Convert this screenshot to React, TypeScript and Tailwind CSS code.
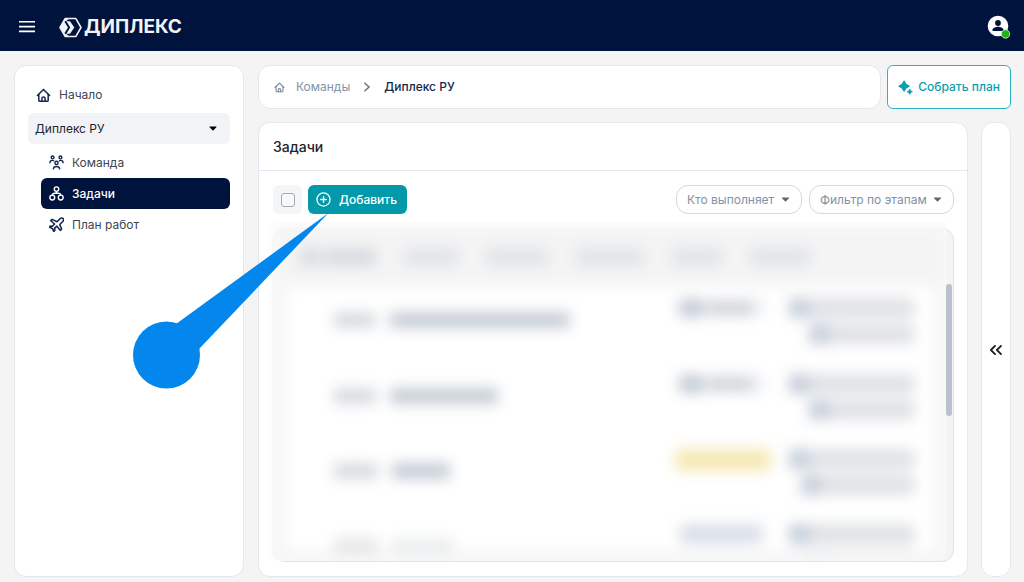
import { useState, type ReactNode } from "react";

const stroke = {
  fill: "none",
  stroke: "currentColor",
  strokeLinecap: "round" as const,
  strokeLinejoin: "round" as const,
};

function HomeIcon({ className }: { className?: string }) {
  return (
    <svg viewBox="0 0 16 16" className={className} strokeWidth={1.6} {...stroke} aria-hidden="true">
      <path d="M1.500 8 8 1.500l6.500 6.500" />
      <path d="M3 7v6a1.200 1.200 0 0 0 1.200 1.200h7.600A1.200 1.200 0 0 0 13 13V7" />
      <path d="M6.300 14.200v-2.900a1.700 1.700 0 0 1 3.400 0v2.900" />
    </svg>
  );
}

function TeamIcon({ className }: { className?: string }) {
  return (
    <svg viewBox="0 0 16 16" className={className} strokeWidth={1.500} {...stroke} aria-hidden="true">
      <circle cx="3.800" cy="2.600" r="1.500" />
      <circle cx="12.200" cy="2.600" r="1.500" />
      <circle cx="8" cy="8.400" r="1.700" />
      <path d="M1 8.200c0-1.500.9-2.500 2.500-2.500.6 0 1 .1 1.400.4M15 8.200c0-1.500-.9-2.500-2.500-2.500-.6 0-1 .1-1.400.4" />
      <path d="M4.600 14.800c.2-1.600 1.600-2.600 3.400-2.600s3.200 1 3.400 2.600" />
    </svg>
  );
}

function TreeIcon({ className }: { className?: string }) {
  return (
    <svg viewBox="0 0 16 16" className={className} strokeWidth={1.500} {...stroke} aria-hidden="true">
      <circle cx="8" cy="3.300" r="2.400" />
      <circle cx="3.500" cy="12.300" r="2.600" />
      <circle cx="12.500" cy="12.300" r="2.600" />
      <path d="M8 5.700v2.100M3.500 9.700C3.700 8.500 4.500 7.800 6 7.800h4c1.500 0 2.300.7 2.500 1.900" />
    </svg>
  );
}

function PlaneIcon({ className }: { className?: string }) {
  return (
    <svg viewBox="1 1 22 22" className={className} strokeWidth={2.300} {...stroke} aria-hidden="true">
      <path d="m17.500 20.500 2-1.800L16.800 12l4-4c1.500-1.500 1.600-3.800.9-4.900-1.200-.7-3.500-.6-5 .9l-3.900 3.900L5.500 4.500l-2 2 5.700 4.800L6 14.600l-3-.5-1.500 1.500 4.300 2.200 2.200 4.400 1.600-1.500-.5-3 3.400-3.300z" />
    </svg>
  );
}

function Caret({ className }: { className?: string }) {
  return (
    <svg viewBox="0 0 10 6" className={className} fill="currentColor" aria-hidden="true">
      <path d="M1.200.5h7.600c.6 0 .8.600.4 1L5.600 5.200a.8.800 0 0 1-1.200 0L.8 1.500c-.4-.4-.2-1 .4-1z" />
    </svg>
  );
}

function Logo() {
  return (
    <a href="#home" className="flex items-center gap-[2px] text-[#f1f3f7]">
      <svg viewBox="0 0 24 22" className="h-[21px] w-[23px]" aria-hidden="true">
        <path d="M6.500 1.500h11L23 11l-5.500 9.500h-11L1 11z" fill="none" stroke="currentColor" strokeWidth="1.600" strokeLinejoin="round" />
        <path d="M6.500 1.500h4L7.500 4.500h4L16 11l-4.500 6.500h-4l3 3h-4L1 11z" fill="currentColor" />
        <path d="m6.500 4.500 4 6.500-4 6.500" fill="none" stroke="#00133d" strokeWidth="2" />
      </svg>
      <span className="text-[19px] leading-6 font-bold">ДИПЛЕКС</span>
    </a>
  );
}

function NavLink({ icon, label, active }: { icon: ReactNode; label: string; active?: boolean }) {
  return (
    <a
      href="#section"
      aria-current={active ? "page" : undefined}
      className={
        active
          ? "flex h-[31px] items-center gap-2 rounded-md bg-[#00133d] px-2 font-medium text-white"
          : "flex h-[31px] items-center gap-2 px-2 text-[#3f4650]"
      }
    >
      <span className={active ? "text-white" : "text-[#14274d]"}>{icon}</span>
      {label}
    </a>
  );
}

function Sidebar() {
  return (
    <nav className="w-[230px] shrink-0 rounded-xl border border-[#e4e7ee] bg-white px-[13px] pt-[14px] text-xs">
      <a href="#start" className="flex h-[30px] items-center gap-2 px-2 text-[#3f4650]">
        <HomeIcon className="size-[15px] text-[#14274d]" />
        Начало
      </a>
      <div className="relative my-[3px]">
        <select
          aria-label="Команда"
          className="h-[31px] w-full appearance-none rounded-md bg-[#f1f3f7] px-[7px] text-xs text-[#20242b]"
        >
          <option>Диплекс РУ</option>
        </select>
        <Caret className="pointer-events-none absolute top-[13px] right-[13px] h-[5px] w-2 text-black" />
      </div>
      <div className="pl-[13px]">
        <NavLink icon={<TeamIcon className="size-[15px]" />} label="Команда" />
        <NavLink icon={<TreeIcon className="size-[15px]" />} label="Задачи" active />
        <NavLink icon={<PlaneIcon className="size-[15px]" />} label="План работ" />
      </div>
    </nav>
  );
}

function Filter({ label, width }: { label: string; width: string }) {
  return (
    <div className="relative">
      <select
        aria-label={label}
        className={`${width} h-[29px] appearance-none rounded-xl border border-[#d5d8de] bg-white pl-[10px] text-xs text-[#7f92a8]`}
      >
        <option>{label}</option>
      </select>
      <Caret className="pointer-events-none absolute top-3 right-3 h-[5px] w-[9px] text-[#666]" />
    </div>
  );
}

type Row = { id: string; title: string; status: "split" | "warn" | "plain"; second: string; faded?: boolean };

const rows: Row[] = [
  { id: "w-[42px]", title: "w-[180px]", status: "split", second: "w-[106px]" },
  { id: "w-[42px]", title: "w-[108px]", status: "split", second: "w-[106px]" },
  { id: "w-[44px]", title: "w-[58px]", status: "warn", second: "w-[114px]" },
  { id: "w-[44px]", title: "w-[62px]", status: "plain", second: "w-[112px]", faded: true },
];

const tabs = ["w-[54px]", "w-[62px]", "w-[68px]", "w-[50px]", "w-[60px]"];

function Status({ kind }: { kind: Row["status"] }) {
  if (kind === "warn") {
    return <div className="-ml-1 h-[22px] w-24 rounded-md bg-[#f5e8b4]" />;
  }
  if (kind === "plain") {
    return <div className="h-[20px] w-[84px] rounded-md bg-[#dae0e8]" />;
  }
  return (
    <div className="flex h-[20px] w-[88px] items-center rounded-md bg-[#f3f5f8]">
      <div className="h-[18px] w-6 bg-[#c4ccd6]" />
      <div className="ml-1 h-[14px] w-[46px] bg-[#d0d3d8]" />
    </div>
  );
}

function Tag({ width }: { width: string }) {
  return (
    <div className={`${width} flex h-[20px] rounded-md bg-[#dfe1e5]`}>
      <div className="h-full w-5 bg-[#c6cfda]" />
    </div>
  );
}

function TaskList() {
  return (
    <div className="relative min-h-0 flex-1 rounded-xl border border-[#e0e3ec] bg-[#f4f4f4]">
      <div className="absolute -top-[7px] right-[6px] bottom-0 -left-[6px] overflow-hidden rounded-b-xl bg-white/60">
        <div className="mt-1 ml-2 h-full bg-[#f4f4f4] blur-[7px]">
          <div className="flex h-[60px] items-center gap-7 pt-[2px] pl-6">
            <div className="flex gap-1">
              <div className="h-[18px] w-5 bg-[#d8dce1]" />
              <div className="h-[18px] w-[52px] bg-[#d8dce1]" />
            </div>
            {tabs.map((width, i) => (
              <div key={i} className={`${width} h-[18px] bg-[#e1e4e9]`} />
            ))}
          </div>
          <div className="mr-3 ml-[10px] h-[266px] overflow-hidden bg-white pr-5">
            <table className="w-full table-fixed" aria-label="Задачи">
              <tbody>
                {rows.map((row, i) => (
                  <tr key={i} className="h-[75px] border-b border-[#fafafa] align-top">
                    <td className="pt-[26px] pl-12">
                      <div className="flex gap-[14px]">
                        <div className={`${row.id} h-4 ${row.faded ? "bg-[#e6e7ea]" : "bg-[#d7dadf]"}`} />
                        <div className={`${row.title} h-4 ${row.faded ? "bg-[#ebedef]" : "bg-[#c5ccd5]"}`} />
                      </div>
                    </td>
                    <td className="w-[108px] pt-3">
                      <Status kind={row.status} />
                    </td>
                    <td className="w-32 pt-3">
                      <div className="flex flex-col items-end gap-[6px]">
                        <Tag width="w-[126px]" />
                        <Tag width={row.second} />
                      </div>
                    </td>
                  </tr>
                ))}
              </tbody>
            </table>
          </div>
        </div>
      </div>
      <div className="absolute top-[55px] right-px h-[132px] w-[6px] rounded-full bg-[#b9c1cc]" />
    </div>
  );
}

function Breadcrumbs() {
  return (
    <nav
      aria-label="Навигация"
      className="flex h-11 min-w-0 flex-1 items-center rounded-xl border border-[#e4e7ee] bg-white px-[15px] text-xs"
    >
      <HomeIcon className="size-[11px] text-[#7c8999]" />
      <a href="#teams" className="ml-[11px] text-[#8294a8]">
        Команды
      </a>
      <svg viewBox="0 0 8 12" className="mx-[13px] h-[10px] w-[8px] text-[#6b7785]" strokeWidth={2} {...stroke} aria-hidden="true">
        <path d="m1.500 1.500 5 4.500-5 4.500" />
      </svg>
      <span className="font-medium text-[#14274d]">Диплекс РУ</span>
    </nav>
  );
}

function Callout() {
  return (
    <svg viewBox="0 0 196 178" className="pointer-events-none absolute top-[212px] left-[133px] h-[178px] w-[196px] text-[#0487ec]" fill="currentColor" aria-hidden="true">
      <circle cx="33.500" cy="143" r="33.500" />
      <path d="M195.500 1 43 112 33.500 143.500 66 137z" />
    </svg>
  );
}

export default function App() {
  const [checked, setChecked] = useState(false);
  return (
    <div className="relative flex h-screen flex-col overflow-hidden bg-[#f4f4f4] font-['Inter','Noto_Sans',sans-serif] text-[#20242b]">
      <header className="flex h-[51px] shrink-0 items-center bg-[#00133d] px-[14px] pt-[3px]">
        <button type="button" aria-label="Меню" className="mr-6 ml-[5px] text-white">
          <svg viewBox="0 0 16 12" className="h-3 w-4" fill="currentColor" aria-hidden="true">
            <path d="M0 0h16v1.600H0zM0 4.800h16v1.600H0zM0 9.600h16v1.600H0z" />
          </svg>
        </button>
        <Logo />
        <button type="button" aria-label="Профиль" className="ml-auto">
          <svg viewBox="0 0 24 24" className="size-6" aria-hidden="true">
            <circle cx="12" cy="11" r="10.300" fill="#fff" />
            <circle cx="12" cy="8" r="2.900" fill="#00133d" />
            <path d="M6.500 16v-1.200c0-2 3.700-3 5.500-3s5.500 1 5.500 3V16z" fill="#00133d" />
            <circle cx="19.500" cy="19" r="4.200" fill="#18b513" stroke="#dff3df" strokeWidth=".8" />
          </svg>
        </button>
      </header>

      <div className="flex min-h-0 flex-1 gap-[14px] px-[14px] pt-[14px] pb-[5px]">
        <Sidebar />
        <div className="-mr-px flex min-w-0 flex-1 flex-col gap-[13px]">
          <div className="flex gap-[6px]">
            <Breadcrumbs />
            <button
              type="button"
              className="flex h-11 items-center gap-[5px] rounded-md border border-[#2ab5bf] bg-white px-[10px] text-xs font-medium text-[#0a9fad]"
            >
              <svg viewBox="0 0 16 16" className="size-[15px]" fill="currentColor" aria-hidden="true">
                <path d="M6.500 1.500Q7.600 5.400 11.500 6.500 7.600 7.600 6.500 11.500 5.400 7.600 1.500 6.500 5.400 5.400 6.500 1.500z" stroke="currentColor" strokeWidth="1.800" strokeLinejoin="round" />
                <path d="m12.500 9.500 1 2 2 1-2 1-1 2-1-2-2-1 2-1z" stroke="currentColor" strokeWidth=".6" strokeLinejoin="round" />
              </svg>
              Собрать план
            </button>
          </div>
          <div className="flex min-h-0 flex-1 gap-[13px]">
            <main className="flex min-w-0 flex-1 flex-col rounded-xl border border-[#e4e7ee] bg-white">
              <h1 className="flex h-12 shrink-0 items-center border-b border-[#e4e7ee] px-[14px] text-sm font-medium">
                Задачи
              </h1>
              <div className="flex min-h-0 flex-1 flex-col gap-[14px] p-[14px] pr-[13px]">
                <div className="flex items-center gap-[6px]">
                  <label className="flex size-[29px] items-center justify-center rounded-md bg-[#f4f5f7]">
                    <input
                      type="checkbox"
                      aria-label="Выбрать все"
                      checked={checked}
                      onChange={(e) => setChecked(e.target.checked)}
                      className="size-[14px] appearance-none rounded-[3px] border border-[#a3a9b8] bg-[#f8f8fa] checked:bg-[#0699a8]"
                    />
                  </label>
                  <button
                    type="button"
                    className="flex h-[29px] items-center gap-2 rounded-md bg-[#0499a8] px-2 pr-[10px] text-xs font-medium text-white"
                  >
                    <svg viewBox="0 0 16 16" className="size-[15px]" strokeWidth={1.400} {...stroke} aria-hidden="true">
                      <circle cx="8" cy="8" r="7" />
                      <path d="M8 5v6M5 8h6" />
                    </svg>
                    Добавить
                  </button>
                  <div className="ml-auto flex gap-[7px]">
                    <Filter label="Кто выполняет" width="w-[126px]" />
                    <Filter label="Фильтр по этапам" width="w-[145px]" />
                  </div>
                </div>
                <TaskList />
              </div>
            </main>
            <aside className="flex w-[30px] shrink-0 items-center justify-center rounded-xl border border-[#e4e7ee] bg-white">
              <button type="button" aria-label="Развернуть панель">
                <svg viewBox="0 0 12 10" className="h-[10px] w-3 text-[#222]" strokeWidth={1.800} {...stroke} aria-hidden="true">
                  <path d="M5 .8.900 5 5 9.200M11 .8 6.900 5 11 9.200" />
                </svg>
              </button>
            </aside>
          </div>
        </div>
      </div>
      <Callout />
    </div>
  );
}
